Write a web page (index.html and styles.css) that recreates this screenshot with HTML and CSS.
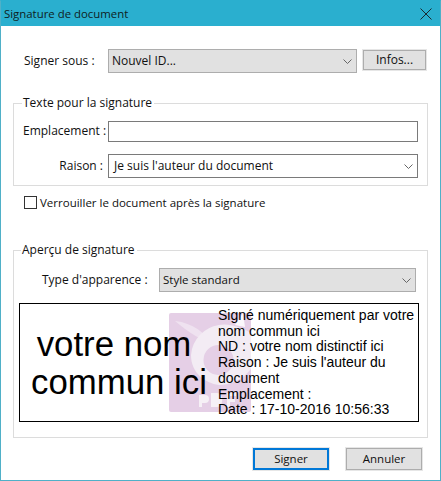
FILE: index.html
```html
<!DOCTYPE html>
<html lang="fr">
<head>
<meta charset="utf-8">
<title>Signature de document</title>
<link rel="stylesheet" href="styles.css">
</head>
<body>
<div class="window">
  <header class="titlebar">
    <span class="title">Signature de document</span>
    <svg class="close" width="12" height="12" viewBox="0 0 12 12"><path d="M.5.5l11 11M11.500.5l-11 11" stroke="#1a2a30" stroke-width="1" fill="none"/></svg>
  </header>
  <main class="content">
    <div class="signer-row">
      <span class="signer-label">Signer sous :</span>
      <div class="select grey signer-select"><span>Nouvel ID...</span><svg class="chev" width="9" height="5" viewBox="0 0 9 5"><path d="M.5.5l4 4 4-4" stroke="#666" fill="none"/></svg></div>
      <div class="btn-wrap infos-wrap"><div class="btn">Infos...</div></div>
    </div>
    <section class="group text-group">
      <div class="legend">Texte pour la signature</div>
      <div class="field-row">
        <span class="field-label">Emplacement :</span>
        <div class="input"></div>
      </div>
      <div class="field-row reason-row">
        <span class="field-label">Raison :</span>
        <div class="select white"><span>Je suis l'auteur du document</span><svg class="chev" width="9" height="5" viewBox="0 0 9 5"><path d="M.5.5l4 4 4-4" stroke="#666" fill="none"/></svg></div>
      </div>
    </section>
    <label class="check-row"><span class="checkbox"></span><span class="check-text">Verrouiller le document après la signature</span></label>
    <section class="group preview-group">
      <div class="legend legend-b">Aperçu de signature</div>
      <div class="type-row">
        <span class="type-label">Type d'apparence :</span>
        <div class="select grey type-select"><span>Style standard</span><svg class="chev" width="9" height="5" viewBox="0 0 9 5"><path d="M.5.5l4 4 4-4" stroke="#666" fill="none"/></svg></div>
      </div>
      <div class="preview">
        <svg class="watermark" width="82" height="99" viewBox="0 0 82 99">
          <rect width="82" height="99" rx="2" fill="#e5cfe6"/>
          <path d="M6 8C24 10 36 20 42 30 34 28 20 20 6 8z" fill="#efe2f0"/>
          <path d="M74 0L76 14 66 12z" fill="#fff" opacity=".85"/>
          <path d="M50 12A33 33 0 0 0 22 42C22 60 36 70 50 72 62 72 74 66 82 56V20C72 14 60 10 50 12zM50 32A14 14 0 1 1 49 62 14 14 0 0 1 50 32z" fill="#f3ecf4"/>
          <path d="M30 82h6a3 3 0 0 1 0 8h-3v4h-3zM42 80h6c7 0 7 14 0 14h-6zM58 80h9v3h-6v3h5v3h-5v5h-3z" fill="#f6f0f6"/>
        </svg>
        <div class="big-name"><div class="big-first">votre nom</div><div>commun ici</div></div>
        <div class="details">Signé numériquement par votre nom commun ici<br>ND : votre nom distinctif ici<br>Raison : Je suis l'auteur du document<br>Emplacement :<br>Date : 17-10-2016 10:56:33</div>
      </div>
    </section>
    <div class="actions">
      <div class="btn-wrap"><div class="btn primary">Signer</div></div>
      <div class="btn-wrap"><div class="btn">Annuler</div></div>
    </div>
  </main>
</div>
</body>
</html>
```

FILE: styles.css
```css
* { box-sizing: border-box; }
html, body { margin: 0; padding: 0; background: #fff; }
body { font-family: "Open Sans", "DejaVu Sans", sans-serif; font-size: 12px; color: #101010; }
.window { width: 441px; height: 481px; border: 1px solid #4fb0c8; border-top-color: #2aafcf; display: flex; flex-direction: column; overflow: hidden; }
.titlebar { height: 25px; flex: none; background: #2aafcf; display: flex; align-items: center; justify-content: space-between; padding: 0 8px 0 3px; }
.title { font-size: 11.400px; color: #0e1d22; }
.content { flex: 1; display: flex; flex-direction: column; padding: 23px 0 0 12px; }
.signer-row { display: flex; align-items: center; height: 24px; }
.signer-label { width: 95px; padding: 0 0 2px 11px; flex: none; }
.select { height: 24px; border: 1px solid #adadad; display: flex; align-items: center; justify-content: space-between; padding: 0 4px 0 3px; }
.select span { padding-bottom: 2px; }
.grey { background: #e1e1e1; }
.white { background: #fff; border-color: #7a7a7a; width: 310px; padding-left: 5px; }
.signer-select { width: 249px; }
.btn-wrap { border: 1px solid #e6e6e6; flex: none; }
.btn { height: 20px; border: 1px solid #adadad; background: #e1e1e1; display: flex; align-items: center; justify-content: center; padding-bottom: 2px; }
.infos-wrap { width: 65px; margin-left: 5px; align-self: flex-start; }
.group { position: relative; width: 415px; border: 1px solid #dcdcdc; }
.legend { position: absolute; top: -9px; left: 8px; background: #fff; padding: 0 2px 0 1px; line-height: 16px; }
.legend-b { left: 7px; }
.text-group { height: 83px; margin-top: 30px; padding: 17px 0 0 9px; }
.field-row { display: flex; align-items: center; height: 21px; }
.field-label { width: 85px; flex: none; text-align: right; padding: 0 5px 2px 0; white-space: nowrap; }
.input { width: 310px; height: 21px; border: 1px solid #7a7a7a; background: #fff; }
.reason-row { height: 24px; margin-top: 12px; }
.check-row { display: flex; align-items: center; height: 14px; margin: 9px 0 0 11px; gap: 3px; }
.check-text { font-size: 11.500px; }
.checkbox { width: 13px; height: 13px; border: 1px solid #333; background: #fff; }
.preview-group { height: 188px; margin-top: 41px; padding: 17px 0 0 5px; }
.type-row { display: flex; align-items: center; height: 24px; }
.type-label { width: 140px; padding: 0 0 2px 23px; flex: none; white-space: nowrap; }
.type-select { width: 257px; font-size: 11.500px; }
.preview { position: relative; width: 400px; height: 119px; margin-top: 11px; border: 1px solid #000; background: #fff; font-family: "Liberation Sans", Arial, sans-serif; display: flex; color: #000; }
.watermark { position: absolute; left: 149px; top: 9px; }
.big-name { position: relative; width: 198px; flex: none; font-size: 34.800px; line-height: 38px; text-align: center; padding-top: 21px; }
.big-first { padding-right: 10px; }
.details { position: relative; width: 198px; font-size: 14px; line-height: 15.700px; padding-top: 4px; }
.actions { display: flex; margin-top: 9px; margin-left: 239px; gap: 15px; font-size: 11.500px; }
.actions .btn-wrap { width: 78px; }
.actions .btn { height: 22px; }
.btn.primary { border: 2px solid #0078d7; }
```
